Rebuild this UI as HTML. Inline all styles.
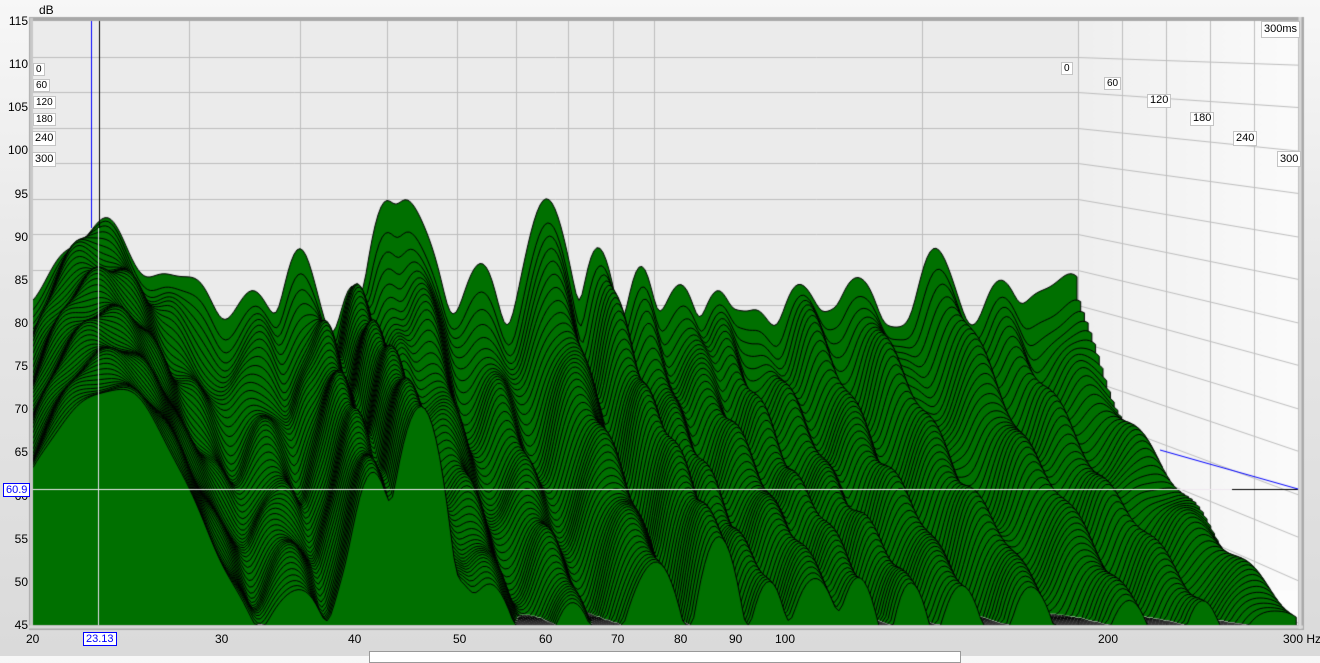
<!DOCTYPE html>
<html><head><meta charset="utf-8"><style>
body{margin:0;width:1320px;height:656px;overflow:hidden;background:linear-gradient(#f7f7f7,#e6e6e6 300px,#dadada);font-family:"Liberation Sans",sans-serif;position:relative}
canvas{position:absolute;left:0;top:0}
.l{position:absolute;font-size:12px;color:#000;line-height:12px;white-space:nowrap}
.ya{position:absolute;right:1292px;font-size:12px;line-height:12px;text-align:right}
.b{position:absolute;background:#fff;border:1px solid #c4c4c4;font-size:10px;line-height:11px;padding:0 2px;height:11px}
.cx{position:absolute;border:1px solid #0000ff;color:#0000ff;background:#fff;font-size:11px;line-height:12px;padding:0 2px}
</style></head><body>
<canvas id="c" width="1320" height="656"></canvas>
<div class="l" style="left:39px;top:4px">dB</div>
<div id="ya"></div>
<div class="b" style="left:33px;top:63px">0</div>
<div class="b" style="left:33px;top:79px">60</div>
<div class="b" style="left:33px;top:96px">120</div>
<div class="b" style="left:33px;top:113px">180</div>
<div class="b" style="left:32px;top:131px;font-size:11px;height:13px;line-height:13px">240</div>
<div class="b" style="left:32px;top:152px;font-size:11px;height:13px;line-height:13px">300</div>
<div class="b" style="left:1061px;top:62px">0</div>
<div class="b" style="left:1104px;top:77px">60</div>
<div class="b" style="left:1147px;top:94px;font-size:11px;height:12px">120</div>
<div class="b" style="left:1190px;top:112px;font-size:11px;height:12px">180</div>
<div class="b" style="left:1233px;top:131px;font-size:11px;height:13px;line-height:13px">240</div>
<div class="b" style="left:1277px;top:151px;font-size:11px;height:14px;line-height:14px">300</div>
<div class="b" style="left:1261px;top:21px;font-size:11px;height:15px;line-height:15px">300ms</div>
<div class="cx" style="left:3px;top:483px">60.9</div>
<div class="cx" style="left:83px;top:632px">23.13</div>
<div id="xa"></div>
<div style="position:absolute;left:369px;top:651px;width:590px;height:10px;background:#fff;border:1px solid #999"></div>
<script>
var c=document.getElementById('c'),g=c.getContext('2d');
var ya='';for(var k=0;k<=14;k++){var v=115-5*k;ya+='<div class="ya" style="top:'+(15+43.14*k)+'px">'+v+'</div>';}
document.getElementById('ya').innerHTML=ya;
var xl=[[20,33],[30,222],[40,355],[50,460],[60,546],[70,618],[80,681],[90,736],[100,785],[200,1108]];
var xa='';xl.forEach(function(a){xa+='<div class="l" style="top:633px;left:'+(a[1]-(a[0]>=100?10:7))+'px">'+a[0]+'</div>';});
xa+='<div class="l" style="top:633px;left:1283px">300 Hz</div>';
document.getElementById('xa').innerHTML=xa;
g.fillStyle='#a8a8a8';g.fillRect(29,17,1275,613);
g.fillStyle='#c8c8c8';g.fillRect(30,18,3,610);
g.fillStyle='#ebebeb';g.fillRect(33,21,1045,604);
var gr=g.createLinearGradient(1078,0,1298,0);gr.addColorStop(0,'#efefef');gr.addColorStop(1,'#fbfbfb');
g.fillStyle=gr;g.fillRect(1078,21,220,604);
g.save();g.beginPath();g.rect(33,21,1265,604);g.clip();
g.fillStyle='#fdfdfd';g.fillRect(33,590,1265,35);
g.strokeStyle='#bdbdbd';g.lineWidth=1;
function ln(a,b,c2,d){g.beginPath();g.moveTo(a,b);g.lineTo(c2,d);g.stroke();}
for(var y=21+35.5;y<625;y+=35.5){var yy=Math.round(y)+.5;ln(33,yy,1078,yy);ln(1078,yy,1298,21+(yy-21)*1.21);}
function bx(f){return 33+1045*Math.log(f/20)/Math.log(15);}
[30,40,50,60,70,80,90,100,200].forEach(function(f){var x=Math.round(bx(f))+.5;ln(x,21,x,625);});
for(var i=0;i<5;i++){var x=1078.5+44*i;ln(x,21,x,625);}
var P=[[95,342,235,75,0.6],[170,300,60,60,0.35],[250,280,40,40,0.35],[300,308,60,30,0.3],
[315,260,150,25,0.8],[352,280,220,25,0.8],[385,360,40,25,0.3],[412,372,40,35,0.3],[480,300,20,30,0.3],
[545,362,60,35,0.3],[600,327,90,25,0.35],[640,290,40,25,0.3],[680,285,50,30,0.35],[715,282,50,25,0.35],
[760,250,40,25,0.3],[800,290,40,30,0.4],[860,300,40,30,0.4],[940,315,20,35,0.4],[1000,285,20,30,0.35],[1060,300,20,50,0.25]];
var H=20;
function h(x,t){var s=0;for(var j=0;j<P.length;j++){var p=P[j];var ht=p[1]+(p[2]-p[1])*Math.pow(t,p[4]+0.3);var cc=ht-120*Math.pow((x-p[0])/p[3],2);s+=Math.exp(cc/H);}
var fl=245-290*Math.pow(t,0.7);s+=Math.exp(fl/H);var r=H*Math.log(s);
r+=(9*Math.sin(x*0.07+t*25)+5*Math.sin(x*0.13-t*14))*(1-0.5*t);return Math.max(0,r);}
var N=60;g.lineWidth=1;g.strokeStyle='#000';g.fillStyle='#007000';
for(var i=0;i<N;i++){var t=i/(N-1);var yb=570+55*t;var sc=1+0.21*t;
var xs=[],ys=[];
for(var x=33;x<=1078;x+=3){var X=33+(x-33)*sc,Y=yb-h(x,t);xs.push(X);ys.push(Y);}
g.beginPath();g.moveTo(33,yb);
for(var k=0;k<xs.length;k++)g.lineTo(xs[k],ys[k]);
var xe=xs[xs.length-1];g.lineTo(xe,yb);g.closePath();g.fill();
g.beginPath();g.moveTo(xs[0],ys[0]);for(var k=1;k<xs.length;k++)g.lineTo(xs[k],ys[k]);g.lineTo(xe,yb);g.stroke();}
g.restore();
g.lineWidth=1;
g.strokeStyle='#0000ff';ln(91.5,21,91.5,228);
g.strokeStyle='#000';ln(99.5,21,99.5,228);
g.strokeStyle='#e8e0ef';ln(98.5,228,98.5,625);
g.strokeStyle='#f0e8f0';ln(33,489.5,1232,489.5);
g.strokeStyle='#000';ln(1232,489.5,1298,489.5);
g.strokeStyle='#0000ff';ln(1160,450,1298,489);
g.strokeStyle='#d8d8d8';g.lineWidth=3;ln(29,627,1303,627);ln(1300,17,1300,629);
</script>
</body></html>
